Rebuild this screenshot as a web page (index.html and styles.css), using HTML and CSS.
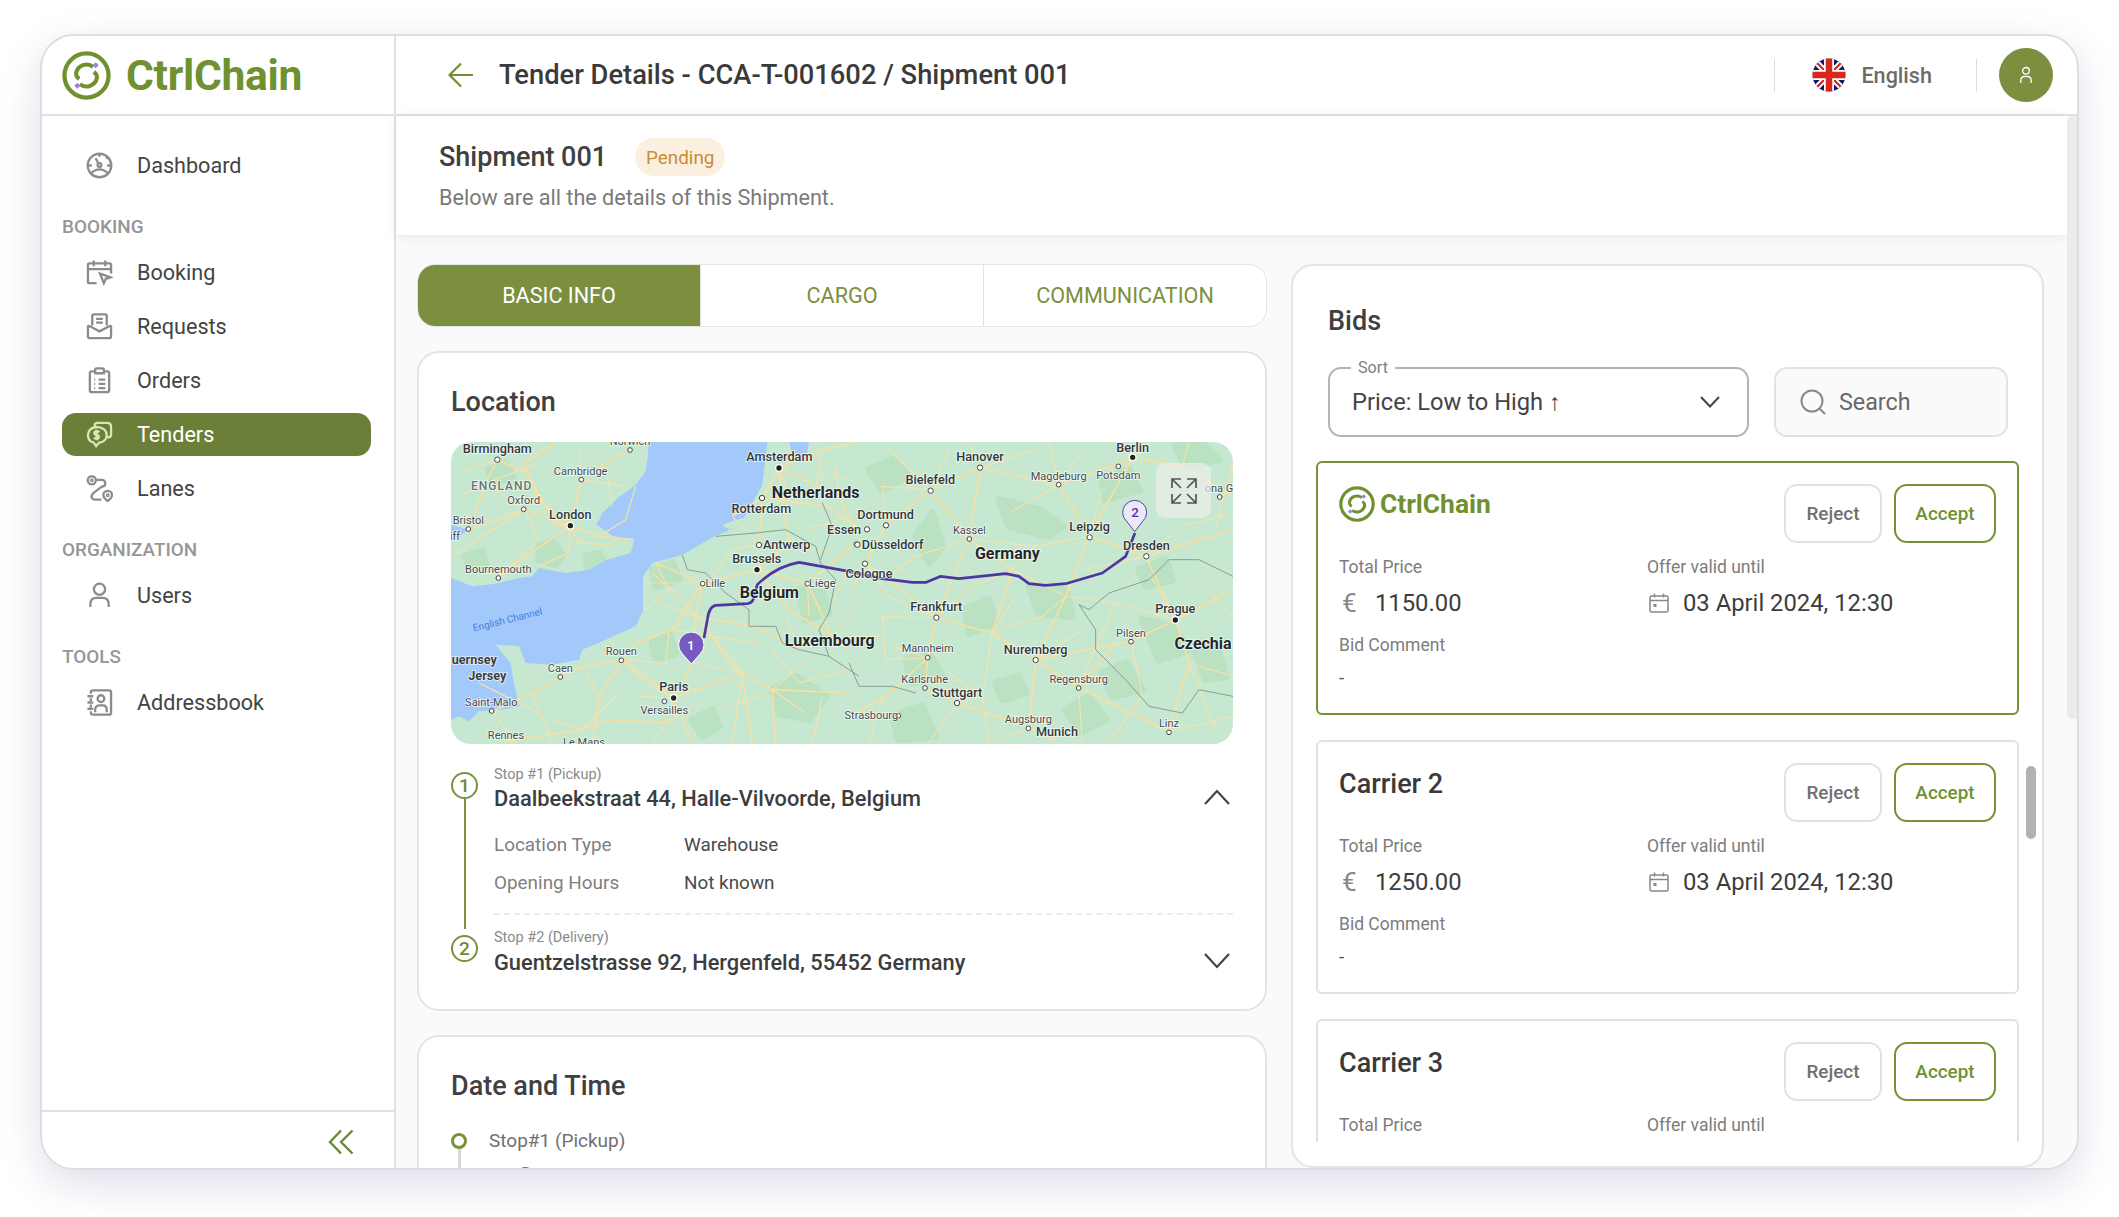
FILE: index.html
```html
<!DOCTYPE html>
<html lang="en">
<head>
    <meta charset="UTF-8">
    <meta name="viewport" content="width=device-width, initial-scale=1.0">
    <title>CtrlChain - Tender Details</title>
    <link rel="stylesheet" href="styles.css">
</head>
<body>
    <div class="app">
        <!-- sidebar -->
        <aside class="sidebar">
            <div class="brand">
                <svg class="logo" viewBox="0 0 48 48" fill="none">
                    <circle cx="24" cy="24" r="21.6" stroke="#6f9130" stroke-width="4.2"/>
                    <path d="M30.5 15.5A10.5 10.5 0 0 0 13.8 21.5Q13.5 25 16.8 27.5M17.5 32.5A10.5 10.5 0 0 0 34.2 26.5Q34.5 23 31.2 20.5" stroke="#6f9130" stroke-width="4"/>
                    <path d="M33 11l3 3-3 3-3-3zM15 31l3 3-3 3-3-3z" fill="#9d80e0"/>
                </svg>
                <span class="brand-name">CtrlChain</span>
            </div>
            <nav class="nav">
                <a class="nav-item">
                    <svg class="nav-icon" viewBox="0 0 28 28"><circle cx="14" cy="14" r="12.2"/><circle cx="14" cy="13.5" r="2"/><path d="M12.8 12L10 6.5M4.5 22.5Q14 13.5 23.5 22.5M6 14H3M25 14h-3M14 5V2.5M21 7l1.5-1.5"/></svg>
                    Dashboard
                </a>
                <div class="nav-label">BOOKING</div>
                <a class="nav-item">
                    <svg class="nav-icon" viewBox="0 0 28 28"><path d="M11 25H3.5Q2 25 2 23.5V6q0-1.5 1.5-1.5h21Q26 4.5 26 6v9M2 10.5h24M8 1.5v6M20 1.5v6M14.5 15l11 4-5 1.5-2 4.5z"/></svg>
                    Booking
                </a>
                <a class="nav-item">
                    <svg class="nav-icon" viewBox="0 0 28 28"><path d="M6.5 13V3q0-1.5 1.500-1.500h12Q21.5 1.500 21.500 3v10M10.500 6h7M10.500 10h7M2 14.500V24q0 2 2 2h20q2 0 2-2v-9.500q0-1.500-1.500-1L14 19 3.500 13.500Q2 13 2 14.500z"/></svg>
                    Requests
                </a>
                <a class="nav-item">
                    <svg class="nav-icon" viewBox="0 0 28 28"><path d="M9.5 4.5H6Q4 4.5 4 6.5V24q0 2 2 2h16q2 0 2-2V6.5q0-2-2-2h-3.5M9.5 3q0-1.500 1.500-1.500h6q1.500 0 1.500 1.500v3.500h-9zM8.500 13h1M13 13h7M8.500 17.500h1M13 17.500h7M8.500 22h1M13 22h7"/></svg>
                    Orders
                </a>
                <a class="nav-item active">
                    <svg class="nav-icon" viewBox="0 0 28 28"><path d="M9 6.5V5q0-3 3-3h10q4 0 4 4v8q0 3-3 3h-1.5M10.5 6.5C6 6.5 2 9.500 2 14.500c0 4 2.500 7 6 8l2.500 3.500 3-3.500c5-.5 8-4 8-8 0-5-4.500-8.500-11-8.500z"/><path d="M14 11.5q-1.500-1-3-1-2.300.2-2.300 2t2.300 2 2.300 2-2.300 2q-1.500 0-3-1M11 9v11"/></svg>
                    Tenders
                </a>
                <a class="nav-item">
                    <svg class="nav-icon" viewBox="0 0 28 28"><circle cx="6" cy="5.5" r="4.2"/><circle cx="6" cy="5.5" r=".8"/><path d="M11 5h5q4 0 4 3.500T16.500 12l-8 6Q5 21 6 23.500t4 2h6"/><path d="M22.5 16.5a4.500 4.500 0 0 1 4.500 4.500q0 2.500-4.500 6-4.500-3.500-4.500-6a4.500 4.500 0 0 1 4.500-4.500z"/><circle cx="22.5" cy="21" r=".8"/></svg>
                    Lanes
                </a>
                <div class="nav-label">ORGANIZATION</div>
                <a class="nav-item">
                    <svg class="nav-icon" viewBox="0 0 28 28"><circle cx="14" cy="7.5" r="5.8"/><path d="M4.5 26v-3Q4.500 16.500 11 16.500h6q6.500 0 6.500 6.500v3"/></svg>
                    Users
                </a>
                <div class="nav-label">TOOLS</div>
                <a class="nav-item">
                    <svg class="nav-icon" viewBox="0 0 28 28"><path d="M5 5V3.5Q5 1.5 7 1.5h17q2 0 2 2v21q0 2-2 2H7q-2 0-2-2V23M1.5 7.5h6M1.5 14h6M1.5 20.5h6M5 9.5v3M5 16v3"/><circle cx="15.5" cy="10" r="3.5"/><path d="M9.5 24v-2q0-5 4-5h4q4 0 4 5v2"/></svg>
                    Addressbook
                </a>
            </nav>
            <div class="collapse">
                <svg class="collapse-icon" viewBox="0 0 26 26" fill="none"><path d="M13 1.5L2 13l11 11.5M24.5 1.5L13 13l11.5 11.5" stroke="#6b8a34" stroke-width="2.4"/></svg>
            </div>
        </aside>

        <div class="main">
            <header class="topbar">
                <svg class="back" viewBox="0 0 26 26" fill="none"><path d="M25 13H2M13 1.5L1.5 13 13 24.5" stroke="#6f9130" stroke-width="2.2"/></svg>
                <h1>Tender Details - CCA-T-001602 / Shipment 001</h1>
                <div class="lang">
                    <svg class="flag" viewBox="0 0 34 34">
                        <defs><clipPath id="flag-clip"><circle cx="17" cy="17" r="16.5"/></clipPath></defs>
                        <g clip-path="url(#flag-clip)">
                            <rect width="34" height="34" fill="#0a1a6e"/>
                            <path d="M0 0L34 34M34 0L0 34" stroke="#fff" stroke-width="6"/>
                            <path d="M0 0L34 34M34 0L0 34" stroke="#d8281e" stroke-width="2.2"/>
                            <path d="M17 0V34M0 17H34" stroke="#fff" stroke-width="10"/>
                            <path d="M17 0V34M0 17H34" stroke="#d8281e" stroke-width="6.5"/>
                        </g>
                    </svg>
                    <span>English</span>
                </div>
                <div class="avatar">
                    <svg viewBox="0 0 18 18" fill="none"><circle cx="9" cy="4.8" r="3.3" stroke="#fff" stroke-width="1.3"/><path d="M3.8 17v-2.5q0-4 4-4h2.400q4 0 4 4V17" stroke="#fff" stroke-width="1.3"/></svg>
                </div>
            </header>

            <div class="main-body">
                <div class="content">
                    <section class="shipment-head">
                        <div class="shipment-title">
                            <h2>Shipment 001</h2>
                            <span class="badge">Pending</span>
                        </div>
                        <p>Below are all the details of this Shipment.</p>
                    </section>

                    <div class="columns">
                        <div class="left-col">
                            <div class="tabs">
                                <div class="tab active">BASIC INFO</div>
                                <div class="tab">CARGO</div>
                                <div class="tab">COMMUNICATION</div>
                            </div>

                            <section class="card location">
                                <h3>Location</h3>
                                <div class="map">
                                    <svg class="map-svg" viewBox="36 37 2346 906">
                                        <rect x="36" y="37" width="2346" height="906" fill="#c6e8d0"/>
                                        <!-- woods -->
                                        <g class="woods">
                                            <path d="M300 350l40-15 30 40-20 30-50-15zM440 380l40-10 20 40-50 15zM640 420l60-20 20 50-70 20zM1000 780l70-40 90 60-50 70-90-20zM640 640l50-30 20 60-60 20zM1080 480l70 10 20 60-70 20zM150 120l50-20 20 40-60 20zM80 380l50-15 10 40-50 10zM760 870l60-30 20 50-50 30z"/>
                                            <g transform="translate(1230 0)">
                                                <path d="M450 210l120 30 70 50-40 30-120-30zM200 320l50-70 30 100-40 50zM540 470l110 10 20 80-100-10zM350 540l70-30 20 70-80 30zM60 120l70-30 50 50-80 40zM760 150l80-30 30 60-100 30zM880 570l90 20 50 70-90 30zM650 840l70-40 50 70-80 40zM170 690l70-20 40 70-90 20zM760 730l70-30 50 80-90 20zM980 50l80-10 50 50-100 20zM1040 670l60-30 30 100-60 10zM440 760l70-20 20 50-70 20zM130 860l90-30 40 90-110 10zM870 420l80-30 20 60-80 20z"/>
                                            </g>
                                        </g>
                                        <!-- water -->
                                        <path fill="#a3c9fb" d="M628 37L626 85 620 125 590 165 530 210 490 250 472 285 520 318 585 335 575 370 500 392 450 420 380 430 300 415 280 440 240 445 170 462 100 470 36 445 36 870 60 860 90 875 120 845 190 840 240 830 225 760 215 700 170 645 240 650 260 700 340 705 420 690 430 660 500 630 590 590 612 545 612 440 640 400 730 375 830 318 900 290 930 240 970 165 985 37zM36 285L90 300 60 320 36 330zM1050 37H1110L1105 70 1060 75z"/>
                                        <path fill="#c6e8d0" d="M830 320l60-25 50 10-30 25-60 5zM850 285l60-20 20 15-60 20z"/>
                                        <!-- minor roads -->
                                        <path class="road-minor" d="M60 130L175 90M140 160L255 240M255 240L300 330 180 440M500 100L520 230M427 150L560 170M620 460L790 460M650 520L770 560M690 600L680 700 550 690M430 710L480 800M280 790L340 940M160 845L230 940M600 800L704 805M820 620L960 640M770 700L910 730M910 730L880 940M1000 780L1120 680M1100 850L1000 780M1120 940L1150 800M880 260L960 345M1050 345L1170 370M1105 462L1110 560M1180 620L1250 540M1020 115L1060 230M1150 60L1130 180M1200 200L1190 100M60 200L140 160 300 100M40 380L100 340 255 240M420 60L427 150M480 320L560 270 590 170M640 430L720 500 770 560M650 400L690 480 620 540M820 440L880 360 960 345M700 600L820 620 870 700 910 730M550 690L620 760 704 805M640 940L680 880 760 830M340 870L430 900 540 790M120 760L300 850M860 840L1000 780M1000 660L1080 760 1230 720M1080 660L1040 560M1180 520L1230 420M1100 300L1230 260M1140 130L1230 150"/>
                                        <g transform="translate(1230 0)">
                                            <path class="road-minor" d="M110 287L100 170 245 180M245 180L120 60M393 115L360 40M393 115L560 60M630 165L600 40M720 320L560 350 490 420M360 328L560 350M490 420L650 500M430 610L400 800 324 820M400 800L420 940M262 565L100 560M50 400L0 500M236 685L130 650M560 690L700 600M689 775L700 940M960 905L1152 860M846 635L880 800M1020 700L1152 740M980 570L900 430M1100 300L1152 100M1000 110L1020 37M850 85L800 37M720 320L760 180M890 380L1000 290M540 895L440 940M324 820L240 940M100 800L60 940M120 440L200 380 360 328M50 400L120 500 262 565M100 560L110 690 236 685M262 565L350 480 490 420M430 610L580 560 650 500M650 500L800 520 980 570M800 520L720 700 689 775M630 165L700 70M480 250L630 165M245 180L300 60M0 300L54 299M700 420L890 380M1000 290L1152 250M1040 440L1152 560M1020 700L1100 900M880 800L780 940M430 610L500 500M300 730L400 800M100 620L0 620"/>
                                        </g>
                                        <!-- main roads -->
                                        <path class="road" d="M175 90L265 130 350 285 394 290M175 90L140 160 90 300M90 300L255 240 394 290M394 290L427 150 500 100 573 60M394 290L300 210 255 100 350 40M394 290L480 320 585 330M394 290L420 340 520 345M394 290L390 370 300 410M180 440L260 380 394 290M704 805L550 690 430 710 365 740 280 790 160 845M704 805L760 700 770 560 790 460M790 460L650 400M790 460L700 600 590 640 550 690M704 805L680 880 500 870 430 900 200 935M704 805L910 730 1000 780 1230 790M910 730L820 620 770 560M704 805L760 940M910 730L940 940M1000 780L1010 940M550 690L480 800 460 940M770 560L950 590 1040 640M790 460L955 420M955 420L1050 345 1020 115M955 420L1105 462 1245 345M960 345L970 205 1020 115M970 205L880 260M1020 115L1200 200 1250 300M1105 462L1180 620 1230 660M955 420L1050 540 1180 620M1020 115L1150 60 1250 37M970 205L1170 230 1250 290"/>
                                        <g transform="translate(1230 0)">
                                            <path class="road" d="M50 400L110 287 245 180 393 115M50 400L260 560M262 565L236 685 228 775 324 820M262 565L430 610 560 690M560 690L540 895 620 935M324 820L540 895M560 690L689 775 960 905M393 115L630 165 720 320M630 165L850 85M245 180L360 328 490 420 430 610M393 115L360 328 262 565M720 320L890 380M720 320L650 500 560 690M890 380L980 570M980 570L846 635 560 690M980 570L1152 480M980 570L1020 700 960 905M850 85L1000 110 1152 200M720 320L850 85M890 380L1152 300M689 775L800 640M236 685L110 800 0 860"/>
                                        </g>
                                        <!-- borders -->
                                        <path class="border" d="M730 375L745 420 800 430 860 490 930 540 930 590 1010 590 1030 640 1080 660 1170 680 1260 740M830 320L950 310 1040 300 1130 350 1145 400 1190 450 1170 550 1140 600 1170 680M1150 220L1180 290 1145 390"/>
                                        <g transform="translate(1230 0)">
                                            <path class="border" d="M690 525L720 540 780 490 900 450 960 390 1050 390 1152 440M690 525L740 600 740 660 830 750 900 830 1000 850 1050 780 1152 800M0 700L30 770 130 770 200 790"/>
                                        </g>
                                        <!-- city dots -->
                                        <g class="dots">
                                            <circle cx="175" cy="90" r="8"/><circle cx="573" cy="61" r="7"/><circle cx="427" cy="150" r="7"/><circle cx="254" cy="239" r="7"/><circle cx="88" cy="298" r="7"/><circle cx="178" cy="445" r="7"/><circle cx="969" cy="205" r="8"/><circle cx="960" cy="346" r="8"/><circle cx="791" cy="462" r="7"/><circle cx="1105" cy="462" r="7"/><circle cx="547" cy="692" r="7"/><circle cx="364" cy="742" r="7"/><circle cx="158" cy="844" r="7"/><circle cx="676" cy="815" r="7"/><circle cx="1252" cy="344" r="7"/>
                                            <g transform="translate(1230 0)">
                                                <circle cx="393" cy="114" r="8"/><circle cx="629" cy="165" r="7"/><circle cx="808" cy="110" r="7"/><circle cx="245" cy="183" r="8"/><circle cx="111" cy="287" r="8"/><circle cx="54" cy="299" r="8"/><circle cx="25" cy="345" r="8"/><circle cx="48" cy="402" r="8"/><circle cx="361" cy="328" r="7"/><circle cx="722" cy="323" r="8"/><circle cx="892" cy="380" r="8"/><circle cx="262" cy="564" r="8"/><circle cx="846" cy="636" r="7"/><circle cx="236" cy="684" r="7"/><circle cx="560" cy="691" r="8"/><circle cx="228" cy="775" r="7"/><circle cx="689" cy="775" r="7"/><circle cx="324" cy="820" r="8"/><circle cx="148" cy="858" r="7"/><circle cx="538" cy="896" r="7"/><circle cx="960" cy="908" r="7"/><circle cx="1112" cy="202" r="7"/>
                                            </g>
                                        </g>
                                        <g class="capitals">
                                            <circle cx="394" cy="288" r="10"/><circle cx="1020" cy="115" r="10"/><circle cx="954" cy="420" r="10"/><circle cx="704" cy="805" r="10"/>
                                            <g transform="translate(1230 0)"><circle cx="851" cy="83" r="10"/><circle cx="979" cy="571" r="10"/></g>
                                        </g>
                                        <!-- route -->
                                        <path class="route" d="M795 625L805 570Q810 530 830 527L925 522Q945 520 948 490L955 465Q1010 410 1080 398L1230 425L1330 447 1420 458 1462 458 1505 440 1560 447 1700 432 1740 440 1770 462 1820 467 1880 462 1990 430 2060 380 2088 310"/>
                                        <!-- labels -->
                                        <g class="labels">
                                            <text x="175" y="71">Birmingham</text><text class="thin" x="573" y="46">Norwich</text><text class="thin" x="425" y="135">Cambridge</text><text class="region" x="188" y="180">ENGLAND</text><text class="thin" x="254" y="223">Oxford</text><text class="thin" x="88" y="283">Bristol</text><text class="thin" x="48" y="330">iff</text><text x="394" y="268">London</text><text class="thin" x="178" y="429">Bournemouth</text>
                                            <text x="1021" y="94">Amsterdam</text><text class="country" x="1130" y="206">Netherlands</text><text x="967" y="249">Rotterdam</text><text x="1043" y="358">Antwerp</text><text x="953" y="400">Brussels</text><text x="1215" y="312">Essen</text><text class="thin" x="829" y="472">Lille</text><text class="thin" x="1150" y="472">Liège</text><text class="country" x="991" y="506">Belgium</text><text class="country" x="1172" y="648">Luxembourg</text>
                                            <text class="thin" x="547" y="677">Rouen</text><text class="thin" x="364" y="727">Caen</text><text class="island" x="106" y="704">uernsey</text><text class="island" x="145" y="750">Jersey</text><text class="thin" x="157" y="828">Saint-Malo</text><text class="thin" x="201" y="928">Rennes</text><text class="thin" x="435" y="950">Le Mans</text><text x="704" y="784">Paris</text><text class="thin" x="676" y="852">Versailles</text>
                                            <text class="sea" transform="translate(208 580) rotate(-14)">English Channel</text>
                                            <g transform="translate(1230 0)">
                                                <text x="851" y="66">Berlin</text><text x="393" y="94">Hanover</text><text class="thin" x="629" y="150">Magdeburg</text><text class="thin" x="808" y="147">Potsdam</text><text x="244" y="164">Bielefeld</text><text x="110" y="268">Dortmund</text><text class="thin" x="361" y="312">Kassel</text><text x="722" y="304">Leipzig</text><text class="country" x="475" y="389">Germany</text><text x="131" y="357">Düsseldorf</text><text x="892" y="362">Dresden</text><text class="thin" x="1110" y="188">ona G</text><text x="60" y="446">Cologne</text><text x="262" y="544">Frankfurt</text><text x="979" y="550">Prague</text><text class="thin" x="846" y="621">Pilsen</text><text class="country" x="1062" y="659">Czechia</text><text class="thin" x="236" y="668">Mannheim</text><text x="560" y="672">Nuremberg</text><text class="thin" x="227" y="760">Karlsruhe</text><text class="thin" x="689" y="760">Regensburg</text><text x="324" y="801">Stuttgart</text><text class="thin" x="67" y="868">Strasbourg</text><text class="thin" x="538" y="881">Augsburg</text><text x="624" y="920">Munich</text><text class="thin" x="960" y="893">Linz</text>
                                            </g>
                                        </g>
                                        <!-- pins -->
                                        <path d="M757 703L730 672A38 38 0 1 1 784 672z" fill="#7759c2" stroke="#fff" stroke-width="3"/>
                                        <text class="pin-num" x="755" y="662" fill="#fff">1</text>
                                        <path d="M2087 306L2063 275A36 36 0 1 1 2111 275z" fill="#ece8f8" stroke="#5a3fb0" stroke-width="3"/>
                                        <text class="pin-num" x="2088" y="263" fill="#4f35a6">2</text>
                                    </svg>
                                    <div class="expand">
                                        <svg viewBox="0 0 28 28" fill="none"><path d="M11 2H2v9M2 2l9 9M17 2h9v9M26 2l-9 9M2 17v9h9M2 26l9-9M26 17v9h-9M26 26l-9-9" stroke="#555" stroke-width="1.7"/></svg>
                                    </div>
                                </div>

                                <div class="stop">
                                    <div class="stop-marker">
                                        <span class="stop-num">1</span>
                                        <span class="stop-line"></span>
                                    </div>
                                    <div class="stop-body with-divider">
                                        <div class="stop-head">
                                            <div>
                                                <div class="stop-kind">Stop #1 (Pickup)</div>
                                                <div class="stop-address">Daalbeekstraat 44, Halle-Vilvoorde, Belgium</div>
                                            </div>
                                            <svg class="chevron" viewBox="0 0 30 18" fill="none"><path d="M3 16L15 3l12 13" stroke="#444" stroke-width="2.2"/></svg>
                                        </div>
                                        <div class="stop-row"><span>Location Type</span><b>Warehouse</b></div>
                                        <div class="stop-row"><span>Opening Hours</span><b>Not known</b></div>
                                    </div>
                                </div>
                                <div class="stop">
                                    <div class="stop-marker">
                                        <span class="stop-num">2</span>
                                    </div>
                                    <div class="stop-body">
                                        <div class="stop-head">
                                            <div>
                                                <div class="stop-kind">Stop #2 (Delivery)</div>
                                                <div class="stop-address second">Guentzelstrasse 92, Hergenfeld, 55452 Germany</div>
                                            </div>
                                            <svg class="chevron" viewBox="0 0 30 18" fill="none"><path d="M3 2l12 13L27 2" stroke="#444" stroke-width="2.2"/></svg>
                                        </div>
                                    </div>
                                </div>
                            </section>

                            <section class="card">
                                <h3>Date and Time</h3>
                                <div class="time-stop">
                                    <div class="time-marker"><span class="time-dot"></span><span class="time-line"></span></div>
                                    <div>
                                        <div class="time-title">Stop#1 (Pickup)</div>
                                        <div class="time-sub">Between</div>
                                    </div>
                                </div>
                            </section>
                        </div>

                        <section class="bids">
                            <h3>Bids</h3>
                            <div class="bid-controls">
                                <div class="sort">
                                    <span class="sort-legend">Sort</span>
                                    <span>Price: Low to High ↑</span>
                                    <svg viewBox="0 0 20 12" fill="none"><path d="M1 1l9 9.5L19 1" stroke="#444" stroke-width="2"/></svg>
                                </div>
                                <div class="search">
                                    <svg viewBox="0 0 26 26" fill="none"><circle cx="12" cy="12" r="10.5" stroke="#888" stroke-width="2"/><path d="M19.5 19.5L25 25" stroke="#888" stroke-width="2"/></svg>
                                    <span>Search</span>
                                </div>
                            </div>
                            <div class="bid-list">
                                <div class="bid selected">
                                    <div class="bid-top">
                                        <div class="bid-brand">
                                            <svg viewBox="0 0 48 48" fill="none">
                                                <circle cx="24" cy="24" r="21.6" stroke="#6f9130" stroke-width="4.2"/>
                                                <path d="M30.5 15.5A10.5 10.5 0 0 0 13.8 21.5Q13.5 25 16.8 27.5M17.5 32.5A10.5 10.5 0 0 0 34.2 26.5Q34.5 23 31.2 20.5" stroke="#6f9130" stroke-width="4"/>
                                                <path d="M33 11l3 3-3 3-3-3zM15 31l3 3-3 3-3-3z" fill="#9d80e0"/>
                                            </svg>
                                            <span>CtrlChain</span>
                                        </div>
                                        <button class="btn-reject">Reject</button>
                                        <button class="btn-accept">Accept</button>
                                    </div>
                                    <div class="bid-grid">
                                        <div class="bid-label">Total Price</div>
                                        <div class="bid-label">Offer valid until</div>
                                        <div class="bid-value"><span class="euro">€</span>1150.00</div>
                                        <div class="bid-value"><svg class="cal" viewBox="0 0 20 20" fill="none"><path d="M1 4.5q0-1.500 1.500-1.500h15Q19 3 19 4.500v13q0 1.500-1.500 1.500h-15Q1 19 1 17.500zM1 7.500h18M5.500 .5v4M14.500 .5v4" stroke="#888" stroke-width="1.5"/><rect x="4.5" y="11" width="3" height="3" fill="#888"/></svg>03 April 2024, 12:30</div>
                                    </div>
                                    <div class="bid-label comment">Bid Comment</div>
                                    <div class="bid-dash">-</div>
                                </div>

                                <div class="bid">
                                    <div class="bid-top">
                                        <div class="bid-name">Carrier 2</div>
                                        <button class="btn-reject">Reject</button>
                                        <button class="btn-accept">Accept</button>
                                    </div>
                                    <div class="bid-grid">
                                        <div class="bid-label">Total Price</div>
                                        <div class="bid-label">Offer valid until</div>
                                        <div class="bid-value"><span class="euro">€</span>1250.00</div>
                                        <div class="bid-value"><svg class="cal" viewBox="0 0 20 20" fill="none"><path d="M1 4.5q0-1.500 1.500-1.500h15Q19 3 19 4.500v13q0 1.500-1.500 1.500h-15Q1 19 1 17.500zM1 7.500h18M5.500 .5v4M14.500 .5v4" stroke="#888" stroke-width="1.5"/><rect x="4.5" y="11" width="3" height="3" fill="#888"/></svg>03 April 2024, 12:30</div>
                                    </div>
                                    <div class="bid-label comment">Bid Comment</div>
                                    <div class="bid-dash">-</div>
                                </div>

                                <div class="bid">
                                    <div class="bid-top">
                                        <div class="bid-name">Carrier 3</div>
                                        <button class="btn-reject">Reject</button>
                                        <button class="btn-accept">Accept</button>
                                    </div>
                                    <div class="bid-grid">
                                        <div class="bid-label">Total Price</div>
                                        <div class="bid-label">Offer valid until</div>
                                    </div>
                                </div>
                            </div>
                            <div class="bids-thumb"></div>
                        </section>
                    </div>
                </div>
                <div class="scrollbar"><div class="scrollbar-thumb"></div></div>
            </div>
        </div>
    </div>
</body>
</html>
```

FILE: styles.css
```css
* {
    box-sizing: border-box;
}

body {
    margin: 0;
    width: 2119px;
    height: 1217px;
    overflow: hidden;
    background-color: #fff;
    font-family: Roboto, "Liberation Sans", sans-serif;
    color: #3d3d3d;
}

h1, h2, h3, p {
    margin: 0;
}

.app {
    display: flex;
    width: 2039px;
    height: 1136px;
    margin: 34px 0 0 40px;
    background-color: #fff;
    border: 2px solid #dedee2;
    border-radius: 34px;
    box-shadow: 0 14px 40px rgba(88, 88, 150, 0.2);
    overflow: hidden;
}

/* sidebar */
.sidebar {
    display: flex;
    flex-direction: column;
    flex: none;
    width: 354px;
    border-right: 2px solid #e2e2e2;
}

.brand {
    display: flex;
    align-items: center;
    flex: none;
    gap: 15px;
    height: 80px;
    padding-left: 20px;
    border-bottom: 2px solid #e2e2e2;
}

.logo {
    width: 49px;
    height: 49px;
}

.brand-name {
    font-size: 42.6px;
    font-weight: 700;
    color: #6f9130;
    letter-spacing: -0.3px;
}

.nav {
    display: flex;
    flex-direction: column;
    flex: 1;
    padding: 22px 23px 0 20px;
}

.nav-item {
    display: flex;
    align-items: center;
    gap: 24px;
    flex: none;
    height: 43px;
    margin: 5.5px 0;
    padding-left: 24px;
    border-radius: 14px;
    font-size: 21.6px;
    color: #444;
}

.nav-item.active {
    background-color: #6b7f38;
    color: #fff;
}

.nav-icon {
    flex: none;
    width: 27px;
    height: 27px;
    fill: none;
    stroke: #8c8c8c;
    stroke-width: 2.4;
}

.nav-item.active .nav-icon {
    stroke: #d7e8b4;
}

.nav-label {
    flex: none;
    height: 22px;
    margin: 24px 0 7px;
    font-size: 18.9px;
    font-weight: 500;
    line-height: 22px;
    color: #969696;
}

.collapse {
    display: flex;
    align-items: center;
    justify-content: flex-end;
    flex: none;
    height: 58px;
    padding: 3px 40px 0 0;
    border-top: 2px solid #e2e2e2;
}

.collapse-icon {
    width: 26px;
    height: 26px;
}

/* main */
.main {
    display: flex;
    flex-direction: column;
    flex: 1;
    min-width: 0;
}

.topbar {
    display: flex;
    align-items: center;
    flex: none;
    height: 80px;
    padding: 0 24px 0 52px;
    border-bottom: 2px solid #e2e2e2;
}

.back {
    flex: none;
    width: 26px;
    height: 26px;
    margin-right: 25px;
}

.topbar h1 {
    flex: 1;
    font-size: 27.3px;
    font-weight: 500;
    color: #3a3a3a;
}

.lang {
    display: flex;
    align-items: center;
    gap: 15px;
    height: 33px;
    padding: 0 44px 0 37px;
    border-left: 1.5px solid #dcdcdc;
    border-right: 1.5px solid #dcdcdc;
    font-size: 21.6px;
    font-weight: 500;
    color: #6c6c6c;
}

.flag {
    width: 34px;
    height: 34px;
}

.avatar {
    display: flex;
    align-items: center;
    justify-content: center;
    width: 54px;
    height: 54px;
    margin-left: 22px;
    border-radius: 50%;
    background-color: #7b8f3f;
}

.avatar svg {
    width: 18px;
    height: 18px;
}

.main-body {
    display: flex;
    flex: 1;
    min-height: 0;
    background-color: #fafafa;
}

.content {
    display: flex;
    flex-direction: column;
    flex: 1;
    min-width: 0;
}

.scrollbar {
    flex: none;
    width: 10px;
}

.scrollbar-thumb {
    height: 603px;
    border-radius: 6px 0 0 6px;
    background-color: #ebebeb;
}

.shipment-head {
    flex: none;
    height: 119px;
    padding: 22px 0 0 43px;
    background-color: #fff;
    box-shadow: 0 2px 12px rgba(0, 0, 0, 0.07);
}

.shipment-title {
    display: flex;
    align-items: center;
    gap: 28px;
    height: 38px;
}

.shipment-title h2 {
    font-size: 27px;
    font-weight: 500;
    color: #404040;
}

.badge {
    display: flex;
    align-items: center;
    justify-content: center;
    width: 90px;
    height: 38px;
    border-radius: 19px;
    background-color: #fbf0e0;
    font-size: 18.9px;
    color: #c98b34;
}

.shipment-head p {
    margin-top: 9px;
    font-size: 21.6px;
    color: #7a7a7a;
}

.columns {
    display: flex;
    flex: 1;
    gap: 24px;
    min-height: 0;
    padding: 29px 23px 0 21px;
    overflow: hidden;
}

.left-col {
    display: flex;
    flex-direction: column;
    flex: none;
    gap: 24px;
    width: 850px;
}

/* tabs */
.tabs {
    display: flex;
    flex: none;
    height: 63px;
    border: 1.5px solid #e4e4e4;
    border-radius: 18px;
    background-color: #fff;
    overflow: hidden;
}

.tab {
    display: flex;
    align-items: center;
    justify-content: center;
    flex: 1;
    border-left: 1.5px solid #e2e2e2;
    font-size: 21.6px;
    color: #7b8f3f;
}

.tab.active {
    border-left: none;
    background-color: #7b8f3f;
    color: #fff;
}

/* cards */
.card {
    flex: none;
    padding: 33px 32px 0;
    border: 2px solid #e4e4e4;
    border-radius: 22px;
    background-color: #fff;
}

.card.location {
    height: 660px;
}

.card h3,
.bids h3 {
    font-size: 27px;
    font-weight: 500;
    line-height: 32px;
    color: #404040;
}

.map {
    position: relative;
    height: 302px;
    margin: 24px 0 22px;
    border-radius: 20px;
    overflow: hidden;
}

.map-svg {
    display: block;
    width: 782px;
    height: 302px;
}

.woods {
    fill: #b9e1c2;
    stroke: #b9e1c2;
    stroke-width: 22;
    stroke-linejoin: round;
}

.road {
    fill: none;
    stroke: #f9dfa0;
    stroke-width: 5;
    stroke-linejoin: round;
}

.road-minor {
    fill: none;
    stroke: #f6e2ad;
    stroke-width: 3.5;
    stroke-linejoin: round;
}

.border {
    fill: none;
    stroke: #7f8c88;
    stroke-width: 2.5;
    stroke-linejoin: round;
}

.dots circle {
    fill: #fff;
    stroke: #444;
    stroke-width: 3;
}

.capitals circle {
    fill: #222;
    stroke: #fff;
    stroke-width: 4;
}

.route {
    fill: none;
    stroke: #4f35a0;
    stroke-width: 8;
    stroke-linejoin: round;
}

.labels text {
    font-size: 38px;
    font-weight: 500;
    text-anchor: middle;
    fill: #33373a;
    stroke: #fff;
    stroke-width: 5;
    stroke-opacity: 0.75;
    paint-order: stroke;
}

.labels .thin {
    font-size: 33px;
    font-weight: 400;
    fill: #45494b;
}

.labels .country {
    font-size: 48px;
    font-weight: 700;
    fill: #23272a;
}

.labels .island {
    font-size: 38px;
    font-weight: 700;
    fill: #3a3f42;
}

.labels .region {
    font-size: 36px;
    letter-spacing: 3px;
    fill: #64786e;
}

.labels .sea {
    font-size: 30px;
    font-weight: 400;
    fill: #3f7fe0;
    stroke: none;
}

.pin-num {
    font-family: Roboto, sans-serif;
    font-size: 40px;
    font-weight: 500;
    text-anchor: middle;
}

.expand {
    position: absolute;
    top: 21px;
    right: 22px;
    display: flex;
    align-items: center;
    justify-content: center;
    width: 55px;
    height: 55px;
    border-radius: 9px;
    background-color: rgba(240, 240, 235, 0.65);
}

.expand svg {
    width: 28px;
    height: 28px;
}

/* stops */
.stop {
    display: flex;
    gap: 16px;
}

.stop-marker {
    display: flex;
    flex-direction: column;
    align-items: center;
    flex: none;
    width: 27px;
    padding-top: 6px;
}

.stop-num {
    display: flex;
    align-items: center;
    justify-content: center;
    flex: none;
    width: 27px;
    height: 27px;
    border: 2.5px solid #7b9140;
    border-radius: 50%;
    background-color: #fff;
    font-size: 19px;
    font-weight: 500;
    color: #6f8a34;
}

.stop-line {
    flex: 1;
    width: 2px;
    background-color: #7b9140;
}

.stop-body {
    flex: 1;
    min-width: 0;
}

.stop-body.with-divider {
    height: 163px;
}

.stop-body.with-divider::after {
    content: "";
    display: block;
    margin-top: 12px;
    border-top: 2px dashed #ececec;
}

.stop-head {
    display: flex;
    align-items: center;
    justify-content: space-between;
    padding-right: 1px;
}

.stop-kind {
    height: 18px;
    font-size: 14.5px;
    line-height: 18px;
    color: #8a8a8a;
}

.stop-address {
    height: 30px;
    font-size: 21.8px;
    font-weight: 500;
    line-height: 30px;
    color: #3d3d3d;
}

.stop-address.second {
    margin-top: 1px;
}

.chevron {
    flex: none;
    width: 30px;
    height: 18px;
    margin-top: 14px;
}

.stop-row {
    display: flex;
    align-items: center;
    height: 38px;
    font-size: 18.9px;
}

.stop-head + .stop-row {
    margin-top: 11px;
}

.stop-row span {
    width: 190px;
    color: #808080;
}

.stop-row b {
    font-weight: 400;
    color: #4a4a4a;
}

/* date and time */
.time-stop {
    display: flex;
    gap: 22px;
    margin-top: 25px;
}

.time-marker {
    display: flex;
    flex-direction: column;
    align-items: center;
    flex: none;
    width: 16px;
    padding-top: 6px;
}

.time-dot {
    flex: none;
    width: 16px;
    height: 16px;
    border: 3.5px solid #7b9140;
    border-radius: 50%;
}

.time-line {
    width: 3px;
    height: 60px;
    background-color: #d8d8d8;
}

.time-title {
    height: 28px;
    font-size: 19px;
    line-height: 28px;
    color: #707070;
}

.time-sub {
    margin: 9px 0 0 32px;
    font-size: 16px;
    color: #808080;
}

/* bids */
.bids {
    position: relative;
    display: flex;
    flex-direction: column;
    flex: none;
    width: 753px;
    padding: 39px 23px 24px;
    border: 2px solid #e4e4e4;
    border-radius: 22px;
    background-color: #fff;
}

.bids h3 {
    padding-left: 12px;
}

.bid-controls {
    display: flex;
    gap: 25px;
    flex: none;
    margin: 30px 0 24px;
    padding-left: 12px;
}

.sort {
    position: relative;
    display: flex;
    align-items: center;
    justify-content: space-between;
    width: 421px;
    height: 70px;
    padding: 0 27px 0 22px;
    border: 2px solid #b4b4b4;
    border-radius: 13px;
    font-size: 23.7px;
    color: #444;
}

.sort svg {
    width: 20px;
    height: 12px;
}

.sort-legend {
    position: absolute;
    top: -11px;
    left: 21px;
    padding: 0 7px;
    background-color: #fff;
    font-size: 16.2px;
    line-height: 20px;
    color: #808080;
}

.search {
    display: flex;
    align-items: center;
    gap: 13px;
    width: 234px;
    height: 70px;
    padding-left: 24px;
    border: 2px solid #e2e2e2;
    border-radius: 13px;
    background-color: #fafafa;
    font-size: 23.3px;
    color: #686868;
}

.search svg {
    width: 26px;
    height: 26px;
}

.bid-list {
    display: flex;
    flex-direction: column;
    flex: 1;
    gap: 25px;
    min-height: 0;
    overflow: hidden;
}

.bid {
    flex: none;
    width: 703px;
    height: 254px;
    padding: 21px 21px 0;
    border: 2px solid #e2e2e2;
    border-radius: 6px;
}

.bid.selected {
    border-color: #749433;
}

.bid-top {
    display: flex;
    align-items: flex-start;
    gap: 12px;
}

.bid-brand {
    display: flex;
    align-items: center;
    flex: 1;
    gap: 5px;
    margin-top: 2px;
    font-size: 26.4px;
    font-weight: 700;
    color: #6f9130;
}

.bid-brand svg {
    width: 36px;
    height: 36px;
}

.bid-name {
    flex: 1;
    margin-top: 5px;
    font-size: 27px;
    font-weight: 500;
    line-height: 32px;
    color: #3a3a3a;
}

.btn-reject,
.btn-accept {
    width: 98px;
    height: 59px;
    padding: 0;
    border: 2px solid #e2e2e2;
    border-radius: 13px;
    background-color: #fff;
    font-family: inherit;
    font-size: 18.9px;
    font-weight: 500;
    color: #707070;
}

.btn-accept {
    width: 102px;
    border-color: #749433;
    color: #6f9130;
}

.bid-grid {
    display: grid;
    grid-template-columns: 308px 1fr;
    row-gap: 10px;
    margin-top: 12px;
}

.bid-label {
    height: 24px;
    font-size: 17.5px;
    line-height: 24px;
    color: #7c7c7c;
}

.bid-label.comment {
    margin-top: 16px;
}

.bid-value {
    display: flex;
    align-items: center;
    height: 28px;
    font-size: 23.8px;
    color: #3d3d3d;
}

.euro {
    flex: none;
    width: 36px;
    padding-left: 3px;
    font-size: 26px;
    color: #888;
}

.cal {
    flex: none;
    width: 20px;
    height: 20px;
    margin: 0 14px 0 2px;
}

.bid-dash {
    height: 24px;
    margin-top: 9px;
    font-size: 18.9px;
    line-height: 24px;
    color: #555;
}

.bids-thumb {
    position: absolute;
    top: 500px;
    right: 6px;
    width: 10px;
    height: 73px;
    border-radius: 5px;
    background-color: #b2b2b2;
}
```
